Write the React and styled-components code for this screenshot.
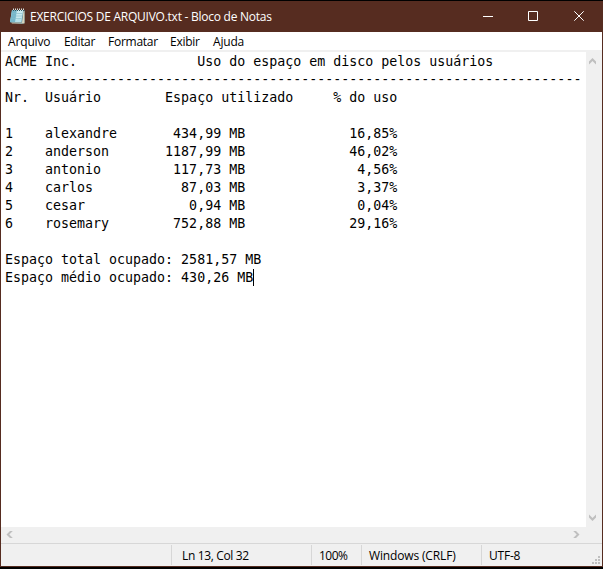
import React from "react";
import styled, { createGlobalStyle } from "styled-components";

const GlobalStyle = createGlobalStyle`
  * { box-sizing: border-box; }
  body { margin: 0; background: #000; overflow: hidden; }
`;

const Desktop = styled.div`
  width: 603px;
  height: 569px;
  padding: 1px 0 2px;
  background: #000;
  font-family: "Open Sans", "Noto Sans", sans-serif;
  font-size: 12px;
  color: #000;
`;

const Window = styled.div`
  display: flex;
  flex-direction: column;
  height: 566px;
  border: solid #562c20;
  border-width: 0 1px 1px;
  background: #f0f0f0;
`;

const TitleBar = styled.header`
  display: flex;
  align-items: center;
  flex: 0 0 31px;
  background: #562c20;
  color: #fff;
  padding-left: 8px;
`;

const Label = styled.span`
  white-space: pre;
  font-size: 12px;
  letter-spacing: ${(p) => p.$spacing || 0}px;
`;

const Title = styled(Label)`
  flex: 1;
  padding-left: 4px;
`;

const Controls = styled.div`
  display: flex;
  height: 30px;
  align-self: flex-start;
  padding-right: 0.4px;
`;

const ControlButton = styled.button`
  display: flex;
  align-items: center;
  justify-content: center;
  width: 45.6px;
  padding: 0;
  border: 0;
  background: transparent;
  color: #fff;
`;

const MenuBar = styled.nav`
  display: flex;
  align-items: center;
  flex: 0 0 18px;
  padding: 2px 0 0 7px;
  background: #fff;
`;

const MenuItem = styled(Label)`
  flex: 0 0 ${(p) => p.$width}px;
  line-height: 16px;
`;

const Workspace = styled.main`
  display: grid;
  grid-template-columns: 1fr 16px;
  grid-template-rows: 475px 16px;
  margin-top: 2px;
`;

const Editor = styled.pre`
  margin: 0;
  padding: 1px 0 0 4px;
  background: #fff;
  font-family: "DejaVu Sans Mono", monospace;
  font-size: 13.3px;
  line-height: 18px;
  overflow: hidden;
`;

const Caret = styled.span`
  display: inline-block;
  width: 1px;
  height: 17px;
  vertical-align: top;
  background: #000;
`;

const VerticalScroll = styled.div`
  display: flex;
  flex-direction: column;
  justify-content: space-between;
  align-items: center;
  padding: 5px 2px 5px 0;
  color: #bfbfbf;
`;

const HorizontalScroll = styled.div`
  display: flex;
  justify-content: space-between;
  align-items: center;
  padding: 0 5px 1px 5px;
  color: #bfbfbf;
`;

const StatusBar = styled.footer`
  display: flex;
  flex: 1;
  padding-top: 1px;
  border-top: 1px solid #d7d7d7;
`;

const StatusCell = styled.div`
  flex: 0 0 ${(p) => p.$width}px;
  height: 20px;
  line-height: 21px;
  padding-left: ${(p) => p.$pad}px;
  border-left: ${(p) => (p.$first ? 0 : 1)}px solid #d7d7d7;
`;

const GripHolder = styled.div`
  display: flex;
  flex: 1;
  align-items: flex-end;
  justify-content: flex-end;
  padding: 0 2px 2px 0;
`;

const rows = [
  ["1", "alexandre", "434,99", "16,85%"],
  ["2", "anderson", "1187,99", "46,02%"],
  ["3", "antonio", "117,73", "4,56%"],
  ["4", "carlos", "87,03", "3,37%"],
  ["5", "cesar", "0,94", "0,04%"],
  ["6", "rosemary", "752,88", "29,16%"],
];

const report = [
  "ACME Inc.".padEnd(24) + "Uso do espaço em disco pelos usuários",
  "-".repeat(72),
  "Nr.  Usuário".padEnd(20) + "Espaço utilizado".padEnd(21) + "% do uso",
  "",
  ...rows.map(
    ([nr, user, size, share]) =>
      nr.padEnd(5) + user.padEnd(15) + size.padStart(7) + " MB" + share.padStart(19)
  ),
  "",
  "Espaço total ocupado: 2581,57 MB",
  "Espaço médio ocupado: 430,26 MB",
].join("\n");

const menus = [
  ["Arquivo", 56, -0.15],
  ["Editar", 44, -0.3],
  ["Formatar", 62, -0.25],
  ["Exibir", 43, -0.25],
  ["Ajuda", 40, -0.2],
];

function NotepadIcon() {
  return (
    <svg width="17" height="17" viewBox="0 0 17 17">
      <path d="M3 2L1 14.5L13 16L15.5 15V2Z" fill="#507f91" />
      <path d="M3 2L1 14H12.5L14 2Z" fill="#b5e0e9" />
      <path d="M3.2 2H8L6 14H1Z" fill="#77b7ca" />
      <path d="M8 2H14L13 9L7 12Z" fill="#c9e9ee" />
      <path d="M2 14.5H13L14.5 3H15.5V15.5H3Z" fill="#d8d5bd" />
      <path d="M3 5.5H13.5M2.7 8H13M2.3 10.5H12.5" stroke="#84bdcb" strokeWidth=".6" />
      <path d="M4.5 .5V3M6.5 .5V3M8.5 .5V3M10.5 .5V3M12.5 .5V3M14.5 .5V3" stroke="#d6e0df" />
      <path d="M4 2.5H15" stroke="#385961" strokeDasharray="1 1" />
    </svg>
  );
}

const chevrons = {
  up: "M0 4.5L3.5 1L7 4.5V7.5L3.5 4L0 7.5Z",
  down: "M0 .5L3.5 4L7 .5V3.5L3.5 7L0 3.5Z",
  left: "M4 0L.5 3.5L4 7H6.8L3.3 3.5L6.8 0Z",
  right: "M.2 0L3.7 3.5L.2 7H3L6.5 3.5L3 0Z",
};

function Chevron({ direction }) {
  return (
    <svg width="8" height="8" viewBox="0 0 8 8">
      <path d={chevrons[direction]} fill="currentColor" />
    </svg>
  );
}

const controls = [
  ["Minimizar", "M0 5.5H10"],
  ["Maximizar", "M.5 .5H9.5V9.5H.5Z"],
  ["Fechar", "M.3 .3L9.7 9.7M9.7 .3L.3 9.7"],
];

export default function App() {
  return (
    <>
      <GlobalStyle />
      <Desktop>
        <Window>
          <TitleBar>
            <NotepadIcon />
            <Title $spacing={-0.25}>EXERCICIOS DE ARQUIVO.txt - Bloco de Notas</Title>
            <Controls>
              {controls.map(([name, d]) => (
                <ControlButton key={name} aria-label={name}>
                  <svg width="10" height="10" viewBox="0 0 10 10">
                    <path d={d} fill="none" stroke="currentColor" />
                  </svg>
                </ControlButton>
              ))}
            </Controls>
          </TitleBar>
          <MenuBar>
            {menus.map(([name, width, spacing]) => (
              <MenuItem key={name} $width={width} $spacing={spacing}>{name}</MenuItem>
            ))}
          </MenuBar>
          <Workspace>
            <Editor>{report}<Caret /></Editor>
            <VerticalScroll>
              <Chevron direction="up" />
              <Chevron direction="down" />
            </VerticalScroll>
            <HorizontalScroll>
              <Chevron direction="left" />
              <Chevron direction="right" />
            </HorizontalScroll>
          </Workspace>
          <StatusBar>
            <StatusCell $first $width={170} $pad={0} />
            <StatusCell $width={140} $pad={10}><Label $spacing={-0.35}>Ln 13, Col 32</Label></StatusCell>
            <StatusCell $width={50} $pad={7}><Label $spacing={-0.5}>100%</Label></StatusCell>
            <StatusCell $width={120} $pad={7}><Label $spacing={-0.15}>Windows (CRLF)</Label></StatusCell>
            <StatusCell $width={60} $pad={7}><Label $spacing={-0.2}>UTF-8</Label></StatusCell>
            <GripHolder>
              <svg width="8" height="8" viewBox="0 0 8 8">
                <path d="M6 0h2v2h-2zM3 3h2v2h-2zM6 3h2v2h-2zM0 6h2v2h-2zM3 6h2v2h-2zM6 6h2v2h-2z" fill="#bfbfbf" />
              </svg>
            </GripHolder>
          </StatusBar>
        </Window>
      </Desktop>
    </>
  );
}
